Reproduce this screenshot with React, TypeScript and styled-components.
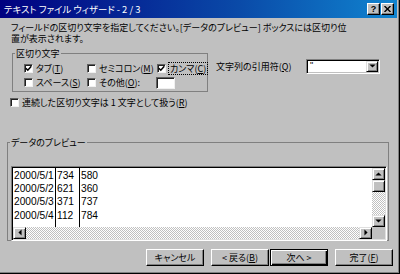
import React from 'react';
import styled, { createGlobalStyle } from 'styled-components';

const GlobalStyle = createGlobalStyle`
  html, body { margin: 0; padding: 0; background: #c0c0c0; }
  body {
    font-family: "Noto Sans CJK JP", "Liberation Sans", sans-serif;
    font-size: 9px;
    color: #000;
    font-feature-settings: "palt";
  }
`;

const Window = styled.div`
  width: 400px;
  height: 274px;
  box-sizing: border-box;
  background: #c0c0c0;
  border-right: 1px solid #000;
  border-bottom: 1px solid #000;
  box-shadow: inset -1px -1px 0 #808080;
  display: flex;
  flex-direction: column;
  overflow: hidden;
`;

const TitleBar = styled.div`
  height: 18px;
  margin-right: 2px;
  padding: 0 3px 0 4px;
  display: flex;
  align-items: center;
  background: linear-gradient(to right, #000080 0%, #0a4aa8 60%, #1084d0 100%);
  color: #fff;
`;

const Title = styled.div`
  flex: 1;
  font-size: 9.4px;
  white-space: nowrap;
`;

const TitleButton = styled.div`
  width: 13px;
  height: 12px;
  box-sizing: border-box;
  background: #c0c0c0;
  border-top: 1px solid #fff;
  border-left: 1px solid #fff;
  border-right: 1px solid #000;
  border-bottom: 1px solid #000;
  box-shadow: inset -1px -1px 0 #808080;
  display: flex;
  align-items: center;
  justify-content: center;
  color: #000;
  font: bold 9px "Liberation Sans", sans-serif;
  & + & { margin-left: 1px; }
`;

const Body = styled.div`
  flex: 1;
  padding: 3.5px 0 0 10px;
  display: flex;
  flex-direction: column;
`;

const Intro = styled.p`
  margin: 0 0 0 1px;
  line-height: 11px;
  white-space: nowrap;
`;

const TopRow = styled.div`
  display: flex;
  align-items: flex-start;
  margin-top: 4.5px;
`;

const Group = styled.fieldset<{ $w: number; $h?: number; $x?: number }>`
  margin: 0 0 0 ${p => p.$x ?? 0}px;
  padding: 0;
  min-width: 0;
  box-sizing: border-box;
  width: ${p => p.$w}px;
  ${p => (p.$h ? `height: ${p.$h}px;` : '')}
  border: 1px solid #808080;
`;

const Legend = styled.legend`
  margin-left: 2px;
  padding: 0 1px;
  line-height: 11px;
`;

const DelimGrid = styled.div`
  display: grid;
  grid-template-columns: 63px 70px auto;
  grid-auto-rows: 11px;
  row-gap: 3px;
  align-items: center;
  padding: 4px 0 3px 11px;
`;

const Check = styled.label`
  display: flex;
  align-items: center;
  gap: 3px;
  white-space: nowrap;
  line-height: 11px;
`;

const Box = styled.span`
  width: 9px;
  height: 9px;
  box-sizing: border-box;
  background: #fff;
  border-top: 1px solid #606060;
  border-left: 1px solid #606060;
  border-right: 1px solid #f0f0f0;
  border-bottom: 1px solid #f0f0f0;
  box-shadow: inset 1px 1px 0 #202020;
  display: flex;
  flex-shrink: 0;
`;

const Focus = styled.span`
  outline: 1px dotted #000;
  outline-offset: 0;
  padding: 0 1px;
`;

const Key = styled.u`
  text-decoration-thickness: 1px;
  text-underline-offset: 1px;
`;

const SmallInput = styled.div`
  width: 19px;
  height: 12px;
  margin-left: -1px;
  box-sizing: border-box;
  background: #fff;
  border-top: 1px solid #606060;
  border-left: 1px solid #606060;
  border-right: 1px solid #f0f0f0;
  border-bottom: 1px solid #f0f0f0;
  box-shadow: inset 1px 1px 0 #202020;
`;

const QuoteField = styled.div`
  display: flex;
  align-items: center;
  margin: 10.5px 0 0 8px;
`;

const FieldLabel = styled.span`
  width: 90px;
  white-space: nowrap;
`;

const Combo = styled.div`
  width: 74px;
  height: 15px;
  box-sizing: border-box;
  background: #fff;
  border-top: 1px solid #808080;
  border-left: 1px solid #808080;
  border-right: 1px solid #fff;
  border-bottom: 1px solid #fff;
  box-shadow: inset 1px 1px 0 #000, inset -1px -1px 0 #c0c0c0;
  display: flex;
  align-items: center;
  padding: 1px 1px 1px 3px;
  font: 9px "Liberation Sans", sans-serif;
  color: #000;
`;

const ComboText = styled.span`
  flex: 1;
  align-self: flex-start;
  line-height: 9px;
`;

const ArrowButton = styled.div<{ $w?: number; $h?: number }>`
  width: ${p => p.$w ?? 12}px;
  height: ${p => p.$h ?? 11}px;
  box-sizing: border-box;
  background: #c0c0c0;
  border-top: 1px solid #dfdfdf;
  border-left: 1px solid #dfdfdf;
  border-right: 1px solid #000;
  border-bottom: 1px solid #000;
  box-shadow: inset 1px 1px 0 #fff, inset -1px -1px 0 #808080;
  display: flex;
  align-items: center;
  justify-content: center;
  flex-shrink: 0;
`;

const ConsecutiveRow = styled.div`
  margin-top: 4.5px;
  height: 11px;
  display: flex;
  align-items: center;
`;

const PreviewInner = styled.div`
  padding: 17.5px 0 0 3px;
`;

const ListFrame = styled.div`
  width: 376px;
  height: 75px;
  box-sizing: border-box;
  border-top: 1px solid #808080;
  border-left: 1px solid #808080;
  border-right: 1px solid #fff;
  border-bottom: 1px solid #fff;
  box-shadow: inset 1px 1px 0 #000, inset -1px -1px 0 #dfdfdf;
  padding: 1px;
  display: grid;
  grid-template-columns: 1fr 13px;
  grid-template-rows: 1fr 12px;
`;

const Sheet = styled.div`
  background: #fff;
  display: flex;
  font: 10.2px "Liberation Sans", sans-serif;
  padding-top: 1px;
`;

const Col = styled.div<{ $w?: number; $line?: boolean }>`
  ${p => (p.$w ? `width: ${p.$w}px;` : 'flex: 1;')}
  box-sizing: border-box;
  padding-left: 1px;
  margin-top: -1px;
  padding-top: 1px;
  ${p => (p.$line ? 'border-right: 1px solid #000;' : '')}
`;

const Cell = styled.div`
  height: 13.4px;
  line-height: 13.4px;
  white-space: nowrap;
`;

const Track = styled.div<{ $dir: 'v' | 'h' }>`
  display: flex;
  flex-direction: ${p => (p.$dir === 'v' ? 'column' : 'row')};
  background: repeating-conic-gradient(#fff 0 25%, #c0c0c0 0 50%) 0 0 / 2px 2px;
`;

const Filler = styled.div`
  flex: 1;
`;

const Corner = styled.div`
  background: #c0c0c0;
`;

const ButtonRow = styled.div`
  display: flex;
  justify-content: flex-end;
  margin: 7.5px 6px 0 0;
`;

const Button = styled.button<{ $gap?: number; $default?: boolean }>`
  width: 58px;
  height: 17px;
  margin: 0 0 0 ${p => p.$gap ?? 0}px;
  padding: 0;
  box-sizing: border-box;
  background: #c0c0c0;
  font: inherit;
  color: #000;
  white-space: nowrap;
  ${p =>
    p.$default
      ? `border: 1px solid #000;
         box-shadow: inset 1px 1px 0 #fff, inset -1px -1px 0 #000, inset -2px -2px 0 #808080;`
      : `border-top: 1px solid #fff;
         border-left: 1px solid #fff;
         border-right: 1px solid #000;
         border-bottom: 1px solid #000;
         box-shadow: inset -1px -1px 0 #808080;`}
`;

const Tick = () => (
  <svg width="7" height="7" viewBox="0 0 7 7">
    <path d="M0.8 3.2 L2.8 5.2 L6.3 1.2" fill="none" stroke="#000" strokeWidth="1.5" />
  </svg>
);

const CheckBox = ({ checked, children }: { checked?: boolean; children: React.ReactNode }) => (
  <Check>
    <Box>{checked && <Tick />}</Box>
    <span>{children}</span>
  </Check>
);

const Tri = ({ dir }: { dir: 'up' | 'down' | 'left' | 'right' }) => {
  const pts = {
    up: '0,4 3.5,0.5 7,4',
    down: '0,0.5 7,0.5 3.5,4',
    left: '4,0 4,7 0.5,3.5',
    right: '0.5,0 0.5,7 4,3.5',
  }[dir];
  const vert = dir === 'up' || dir === 'down';
  return (
    <svg width={vert ? 7 : 4} height={vert ? 4 : 7} viewBox={vert ? '0 0 7 4.5' : '0 0 4.5 7'}>
      <polygon points={pts} fill="#000" />
    </svg>
  );
};

const rows = [
  ['2000/5/1', '734', '580'],
  ['2000/5/2', '621', '360'],
  ['2000/5/3', '371', '737'],
  ['2000/5/4', '112', '784'],
];

export default function App() {
  return (
    <>
      <GlobalStyle />
      <Window>
        <TitleBar>
          <Title>テキスト ファイル ウィザード - 2 / 3</Title>
          <TitleButton>?</TitleButton>
          <TitleButton>
            <svg width="7" height="6" viewBox="0 0 7 6">
              <path d="M0.5 0 L6.5 6 M6.5 0 L0.5 6" stroke="#000" strokeWidth="1.4" />
            </svg>
          </TitleButton>
        </TitleBar>
        <Body>
          <Intro>
            フィールドの区切り文字を指定してください。[データのプレビュー] ボックスには区切り位
            <br />
            置が表示されます。
          </Intro>
          <TopRow>
            <Group $w={196} $x={2}>
              <Legend>区切り文字</Legend>
              <DelimGrid>
                <CheckBox checked>
                  タブ(<Key>T</Key>)
                </CheckBox>
                <CheckBox>
                  セミコロン(<Key>M</Key>)
                </CheckBox>
                <Check>
                  <Box>
                    <Tick />
                  </Box>
                  <Focus>
                    カンマ(<Key>C</Key>)
                  </Focus>
                </Check>
                <CheckBox>
                  スペース(<Key>S</Key>)
                </CheckBox>
                <CheckBox>
                  その他(<Key>O</Key>):
                </CheckBox>
                <SmallInput />
              </DelimGrid>
            </Group>
            <QuoteField>
              <FieldLabel>
                文字列の引用符(<Key>Q</Key>)
              </FieldLabel>
              <Combo>
                <ComboText>"</ComboText>
                <ArrowButton>
                  <Tri dir="down" />
                </ArrowButton>
              </Combo>
            </QuoteField>
          </TopRow>
          <ConsecutiveRow>
            <CheckBox>
              連続した区切り文字は 1 文字として扱う(<Key>R</Key>)
            </CheckBox>
          </ConsecutiveRow>
          <Group $w={382} $h={104} $x={-3} style={{ marginTop: 29.5 }}>
            <Legend>データのプレビュー</Legend>
            <PreviewInner>
              <ListFrame>
                <Sheet>
                  <Col $w={43} $line>
                    {rows.map(r => (
                      <Cell key={r[0]}>{r[0]}</Cell>
                    ))}
                  </Col>
                  <Col $w={24} $line>
                    {rows.map(r => (
                      <Cell key={r[0]}>{r[1]}</Cell>
                    ))}
                  </Col>
                  <Col>
                    {rows.map(r => (
                      <Cell key={r[0]}>{r[2]}</Cell>
                    ))}
                  </Col>
                </Sheet>
                <Track $dir="v">
                  <ArrowButton $w={13} $h={12}>
                    <Tri dir="up" />
                  </ArrowButton>
                  <ArrowButton $w={13} $h={12} />
                  <Filler />
                  <ArrowButton $w={13} $h={12}>
                    <Tri dir="down" />
                  </ArrowButton>
                </Track>
                <Track $dir="h">
                  <ArrowButton $w={13} $h={12}>
                    <Tri dir="left" />
                  </ArrowButton>
                  <Filler />
                  <ArrowButton $w={13} $h={12}>
                    <Tri dir="right" />
                  </ArrowButton>
                </Track>
                <Corner />
              </ListFrame>
            </PreviewInner>
          </Group>
          <ButtonRow>
            <Button>キャンセル</Button>
            <Button $gap={7}>
              &lt; 戻る(<Key>B</Key>)
            </Button>
            <Button $gap={1} $default>
              次へ &gt;
            </Button>
            <Button $gap={7}>
              完了(<Key>F</Key>)
            </Button>
          </ButtonRow>
        </Body>
      </Window>
    </>
  );
}
